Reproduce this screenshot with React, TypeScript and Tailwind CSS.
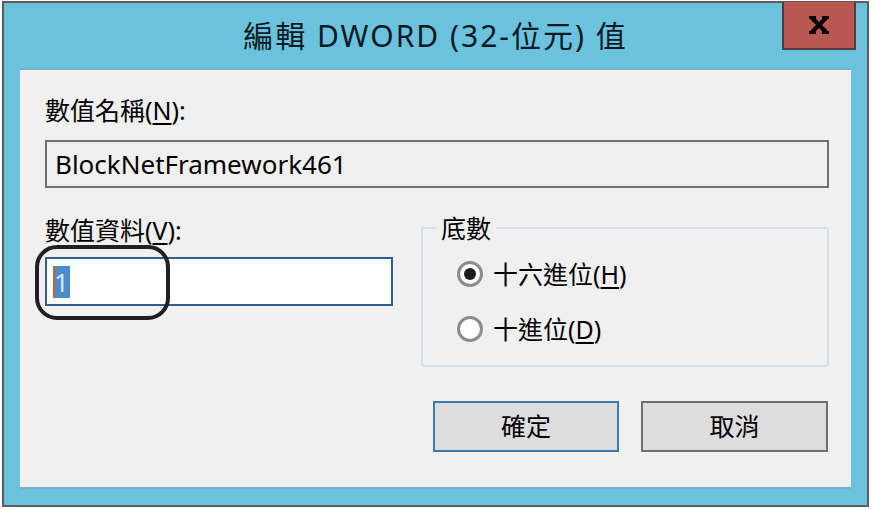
import React from 'react';

const font = "font-['Noto_Sans','Noto_Sans_CJK_TC',sans-serif]";

const CloseGlyph: React.FC = () => (
  <svg width="22" height="18" viewBox="0 0 22 18">
    <path d="M4 2 L18 16 M18 2 L4 16" stroke="#000" strokeWidth="4.2" strokeLinecap="butt" />
    <path d="M1 1.5 H8 M14 1.5 H21 M1 16.5 H8 M14 16.5 H21" stroke="#000" strokeWidth="3" />
  </svg>
);

const Radio: React.FC<{ checked?: boolean; label: string; hotkey: string }> = ({ checked, label, hotkey }) => (
  <div className="flex items-center h-[30px]">
    <span className="w-[26px] h-[26px] rounded-full border-[3px] border-[#8c8c8c] bg-white flex items-center justify-center">
      {checked && <span className="w-[12px] h-[12px] rounded-full bg-[#1c1c1c]" />}
    </span>
    <span className="ml-[10px] text-[25px] leading-[30px] text-black">
      {label}(<span className="underline underline-offset-[3px]">{hotkey}</span>)
    </span>
  </div>
);

const App: React.FC = () => {
  return (
    <div className={`w-[872px] h-[510px] bg-white pt-[1px] pl-[2px] ${font}`}>
      <div className="w-[867px] h-[506px] border-2 border-[#5c5c5c] bg-[#6bc2dd] flex flex-col">
        {/* Title bar */}
        <div className="h-[65px] grid grid-cols-[1fr_auto_1fr]">
          <div />
          <div className="pt-[13px] text-[30px] leading-[40px] tracking-[2px] text-[#0c1a24] whitespace-nowrap">
            編輯 DWORD (32-位元) 值
          </div>
          <div className="flex justify-end pr-[11px]">
            <button className="w-[74px] h-[48px] -mt-[1px] bg-[#b95851] border-2 border-t-0 border-[#5a3a39] flex items-center justify-center">
              <CloseGlyph />
            </button>
          </div>
        </div>

        {/* Content panel */}
        <div className="mx-[16px] h-[421px] bg-[#f0f0f0] border-t-2 border-b-2 border-[#78b0cb] pl-[25px] pr-[22px] text-black">
          <div className="mt-[25px] text-[25px] leading-[30px]">
            數值名稱(<span className="underline underline-offset-[3px]">N</span>):
          </div>
          <div className="mt-[15px] h-[48px] border-2 border-[#707070] bg-[#f0f0f0] pl-[8px] flex items-center text-[26px]">
            BlockNetFramework461
          </div>

          <div className="flex">
            <div className="w-[348px]">
              <div className="mt-[27px] text-[25px] leading-[30px]">
                數值資料(<span className="underline underline-offset-[3px]">V</span>):
              </div>
              <div className="relative mt-[12px] h-[49px] border-2 border-[#2f5f8c] bg-white flex items-center pl-[6px]">
                <span className="relative h-[32px] w-[17px] bg-[#4a8ccb] text-[#d5e4f5] text-[26px] leading-[32px] text-center">
                  <span className="absolute left-0 top-0 bottom-0 w-[2px] bg-[#c8642a]" />
                  1
                </span>
                <span className="absolute -left-[12px] -top-[14px] w-[135px] h-[75px] rounded-[22px] border-[4px] border-[#231f20]" />
              </div>
            </div>

            <fieldset className="ml-[28px] mt-[25px] w-[408px] h-[154px] border-2 border-[#d6e0e6] rounded-[3px]">
              <legend className="ml-[13px] px-[5px] text-[25px] leading-[30px]">底數</legend>
              <div className="mt-[16px] pl-[34px] flex flex-col gap-[25px]">
                <Radio checked label="十六進位" hotkey="H" />
                <Radio label="十進位" hotkey="D" />
              </div>
            </fieldset>
          </div>

          <div className="mt-[34px] flex justify-end gap-[22px] pr-[1px]">
            <button className="w-[186px] h-[51px] bg-[#dddddd] border-2 border-[#3c7aa8] text-[25px]">確定</button>
            <button className="w-[187px] h-[51px] bg-[#dddddd] border-2 border-[#707070] text-[25px]">取消</button>
          </div>
        </div>
      </div>
    </div>
  );
};

export default App;
